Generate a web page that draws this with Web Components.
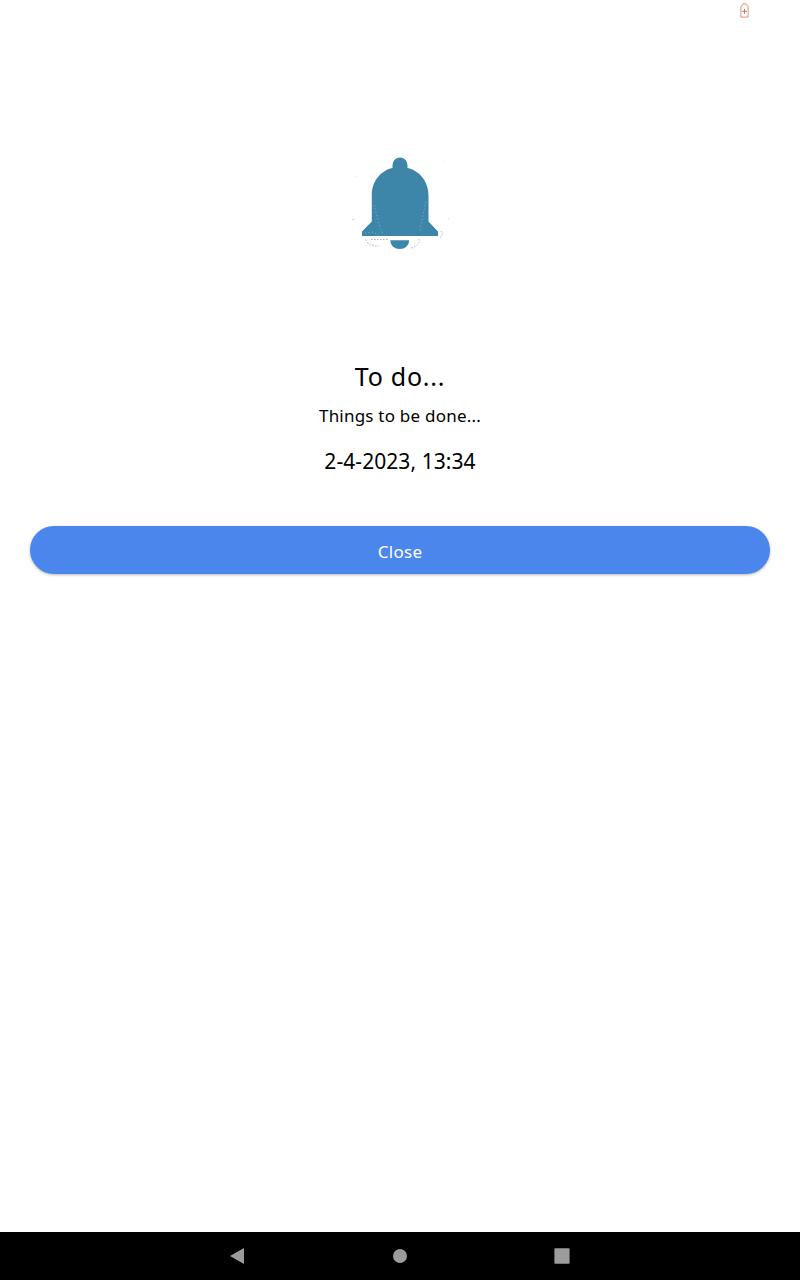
<!DOCTYPE html>
<html lang="en">
<head>
<meta charset="utf-8">
<title>To do</title>
<style>
html,body{margin:0;height:100%;background:#fff}
body{font-family:"Noto Sans","Open Sans",sans-serif;color:#000;overflow:hidden}
</style>
</head>
<body>
<reminder-screen>
  <status-bar slot="status"></status-bar>
  <reminder-card>
    <bell-icon slot="icon"></bell-icon>
    <span slot="title">To do...</span>
    <span slot="detail">Things to be done...</span>
    <span slot="time">2-4-2023, 13:34</span>
    <pill-button slot="action">Close</pill-button>
  </reminder-card>
  <nav-bar slot="nav"></nav-bar>
</reminder-screen>
<script>
const define = (name, html) => customElements.define(name, class extends HTMLElement {
  constructor() {
    super();
    this.attachShadow({ mode: "open" }).innerHTML = html;
  }
});

define("reminder-screen", `
<style>
:host{display:flex;flex-direction:column;height:100vh;background:#fff}
main{flex:1;min-height:0}
</style>
<slot name="status"></slot><main><slot></slot></main><slot name="nav"></slot>`);

define("status-bar", `
<style>
:host{display:flex;justify-content:flex-end;height:24px;padding-right:51px;box-sizing:border-box}
svg{display:block;width:9px;height:16px;margin-top:3px}
</style>
<svg viewBox="0 0 9 16" fill="none" stroke="#dd9178">
<path d="M.9 14.1V3.800Q.9 2.300 2.400 2.200L3 .8h3l.6 1.400q1.500.1 1.500 1.600v10.300z" stroke-width="1"/>
<path d="M4.500 5.800v5M2 8.300h5" stroke="#d47453" stroke-width="1"/>
</svg>`);

define("bell-icon", `
<style>:host,svg{display:block}svg{width:120px;height:115px}</style>
<svg viewBox="0 0 120 115" fill="#3d86aa">
<path d="M52.500 23V20a7.500 7.500 0 0 1 15 0v3C79.500 25.500 88.500 36.500 88.500 50V76.500L98 86.500V91H22V86.500L31.800 76.500V50C31.800 36.500 40.500 25.500 52.500 23z"/>
<path d="M50.300 95.300h18.800v.8a9.400 8 0 0 1-18.800 0z"/>
<g fill="none" stroke="#9fc7d9" stroke-width=".7" stroke-dasharray="1 2.500">
<path d="M34 60l5 19 4 11M86 57l-3 13-3 17M25 88l8-1 6 3"/></g>
<g fill="none" stroke="#6c8790" stroke-width=".6" stroke-dasharray="1.500 1.500">
<path d="M26 94.500q2 7 13 6.500M31 94.500h18M79 94q1 7-8 9M101 86q3 4-1 6"/></g>
<path d="M12 74.500l3-1-2 2zM103 16l1 .5-.5.5zM108 73l1 1-1 .3zM15 31h1v.6h-1z" opacity=".4"/>
</svg>`);

define("reminder-card", `
<style>
:host{display:flex;flex-direction:column;align-items:center;padding:121px 30px 0}
h1,p{margin:0;font-weight:400;white-space:nowrap}
h1{font-size:25px;line-height:34px;margin-top:99px;letter-spacing:.75px}
.detail{font-size:17px;line-height:24px;margin-top:11px;letter-spacing:.22px}
.time{font-size:21px;line-height:28px;margin-top:19px;letter-spacing:.06px}
.action{align-self:stretch;margin-top:51px}
</style>
<slot name="icon"></slot>
<h1><slot name="title"></slot></h1>
<p class="detail"><slot name="detail"></slot></p>
<p class="time"><slot name="time"></slot></p>
<div class="action"><slot name="action"></slot></div>`);

define("pill-button", `
<style>
:host{display:block}
button{display:flex;align-items:center;justify-content:center;width:100%;height:48px;padding:2px 0 0;box-sizing:border-box;border:0;border-radius:24px;background:#4a86ec;color:#fff;font:400 17px "Noto Sans","Open Sans",sans-serif;letter-spacing:.3px;box-shadow:0 1px 3px rgba(0,0,0,.28)}
</style>
<button type="button"><slot></slot></button>`);

define("nav-bar", `
<style>
:host{display:flex;justify-content:center;gap:146px;align-items:center;height:48px;background:#000}
svg{display:block;width:16px;height:16px;fill:#9b9b9b}
</style>
<svg viewBox="0 0 16 16"><path d="M14 0v16L0 8z"/></svg>
<svg viewBox="0 0 16 16"><circle cx="8" cy="8" r="7"/></svg>
<svg viewBox="0 0 16 16"><rect x=".4" y=".3" width="15.200" height="15.400" rx=".8"/></svg>`);
</script>
</body>
</html>
